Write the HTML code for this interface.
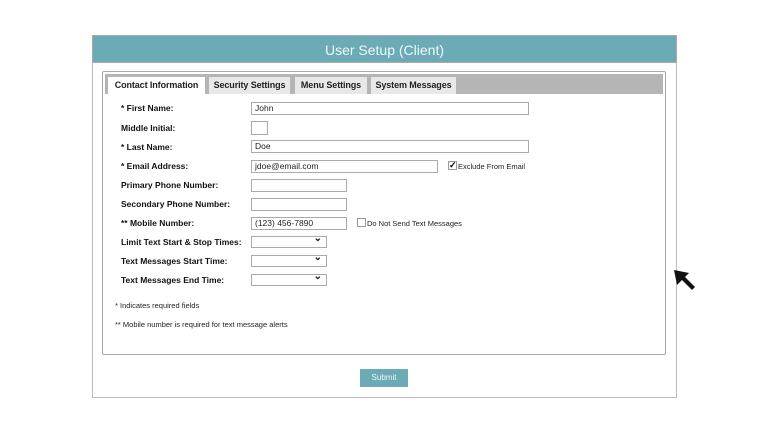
<!DOCTYPE html>
<html><head><style>
*{margin:0;padding:0;box-sizing:border-box}
body{width:768px;height:432px;background:#fff;font-family:"Liberation Sans",sans-serif;position:relative;overflow:hidden}
.a{position:absolute}
.outer{left:92px;top:35px;width:585px;height:363px;border:1px solid #bbb;border-top:none}
.hdr{left:92px;top:35px;width:585px;height:28px;background:#6aabb5;font-size:14px;text-align:center;line-height:28px;border:1px solid #aaa;color:#f2f8f9}
.panel{left:102px;top:71px;width:564px;height:284px;border:1px solid #aaa;border-radius:2px}
.tabbar{left:105px;top:74px;width:558px;height:20px;background:#b5b5b5}
.tab{top:77px;height:17px;background:#e8e8e8;font-size:9px;font-weight:bold;line-height:17px;text-align:center;color:#222;white-space:nowrap;letter-spacing:-0.1px}
.lbl{left:121px;font-size:8.5px;font-weight:bold;color:#111}
.in{left:251px;height:13px;border:1px solid #aaa;font-size:8.5px;line-height:11px;padding-left:3px;color:#222}
.sel::after{content:"⌄";position:absolute;right:4px;top:-4px;font-size:10px;font-weight:bold}
.sm{font-size:7.5px;color:#222}
.cb{width:9px;height:9px;border:1px solid #999}
</style></head><body>
<div class="a outer"></div>
<div class="a hdr">User Setup (Client)</div>
<div class="a panel"></div>
<div class="a tabbar"></div>
<div class="a tab" style="left:108px;width:97px;background:#fff;height:18px">Contact Information</div>
<div class="a tab" style="left:209px;width:81px">Security Settings</div>
<div class="a tab" style="left:295px;width:72px">Menu Settings</div>
<div class="a tab" style="left:371px;width:85px">System Messages</div>

<div class="a lbl" style="top:103px">* First Name:</div>
<div class="a lbl" style="top:123px">Middle Initial:</div>
<div class="a lbl" style="top:142px">* Last Name:</div>
<div class="a lbl" style="top:161px">* Email Address:</div>
<div class="a lbl" style="top:180px">Primary Phone Number:</div>
<div class="a lbl" style="top:199px">Secondary Phone Number:</div>
<div class="a lbl" style="top:218px">** Mobile Number:</div>
<div class="a lbl" style="top:237px">Limit Text Start &amp; Stop Times:</div>
<div class="a lbl" style="top:256px">Text Messages Start Time:</div>
<div class="a lbl" style="top:275px">Text Messages End Time:</div>

<div class="a in" style="top:102px;width:278px">John</div>
<div class="a in" style="top:121px;width:17px;height:14px"></div>
<div class="a in" style="top:140px;width:278px">Doe</div>
<div class="a in" style="top:160px;width:187px">jdoe@email.com</div>
<div class="a in" style="top:179px;width:96px"></div>
<div class="a in" style="top:198px;width:96px"></div>
<div class="a in" style="top:217px;width:96px">(123) 456-7890</div>
<div class="a in sel" style="top:236px;width:76px;height:12px"></div>
<div class="a in sel" style="top:255px;width:76px;height:12px"></div>
<div class="a in sel" style="top:274px;width:76px;height:12px"></div>

<div class="a cb" style="left:448px;top:161px;font-size:9px;line-height:7px;font-weight:bold">✓</div>
<div class="a sm" style="left:458px;top:162px">Exclude From Email</div>
<div class="a cb" style="left:357px;top:218px"></div>
<div class="a sm" style="left:367px;top:219px">Do Not Send Text Messages</div>

<div class="a sm" style="left:115px;top:301px">* Indicates required fields</div>
<div class="a sm" style="left:115px;top:320px">** Mobile number is required for text message alerts</div>

<div class="a" style="left:360px;top:369px;width:48px;height:18px;background:#6aabb5;color:#eef6f7;font-size:8px;text-align:center;line-height:18px">Submit</div>

<svg class="a" style="left:0;top:0" width="768" height="432">
<path d="M674 270 L689 273 L685 277 L695 287 L692 290 L682 280 L677 285 Z" fill="#111"/>
</svg>
</body></html>
